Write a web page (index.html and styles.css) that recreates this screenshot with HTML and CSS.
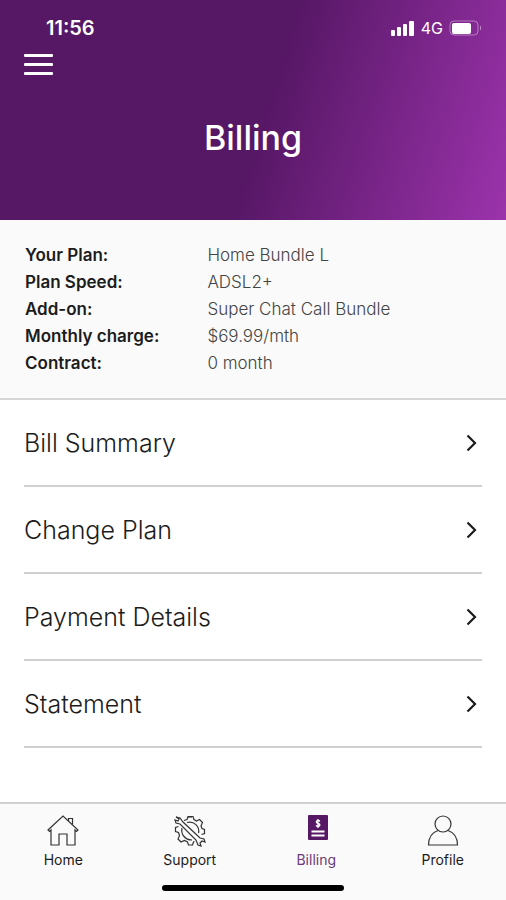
FILE: index.html
```
<!DOCTYPE html>
<html lang="en">
<head>
    <meta charset="UTF-8">
    <meta name="viewport" content="width=device-width, initial-scale=1.0">
    <title>Billing</title>
    <link rel="stylesheet" href="styles.css">
</head>
<body>
    <header class="header">
        <div class="status-bar">
            <span class="time">11:56</span>
            <div class="status-icons">
                <svg class="signal" width="24" height="16" viewBox="0 0 24 16" fill="#fff">
                    <rect x="0" y="10" width="4" height="6" rx="1"/>
                    <rect x="6" y="7" width="4" height="9" rx="1"/>
                    <rect x="12" y="4" width="4" height="12" rx="1"/>
                    <rect x="18" y="1" width="5" height="15" rx="1"/>
                </svg>
                <span class="network">4G</span>
                <svg class="battery" width="33" height="16" viewBox="0 0 33 16">
                    <rect x="1" y="1" width="28" height="14" rx="4" fill="none" stroke="#fff" stroke-opacity="0.4"/>
                    <rect x="3" y="3" width="19" height="11" rx="2" fill="#fff"/>
                    <path d="M31 5.500c1.400.8 1.400 4.200 0 5z" fill="#fff" fill-opacity="0.5"/>
                </svg>
            </div>
        </div>
        <button class="menu-btn" type="button" aria-label="Menu">
            <span class="bar"></span>
            <span class="bar"></span>
            <span class="bar"></span>
        </button>
        <h1>Billing</h1>
    </header>

    <main>
        <dl class="plan">
            <dt>Your Plan:</dt><dd>Home Bundle L</dd>
            <dt>Plan Speed:</dt><dd>ADSL2+</dd>
            <dt>Add-on:</dt><dd>Super Chat Call Bundle</dd>
            <dt>Monthly charge:</dt><dd>$69.99/mth</dd>
            <dt>Contract:</dt><dd>0 month</dd>
        </dl>

        <nav class="links">
            <a href="#summary">Bill Summary
                <svg width="12" height="18" viewBox="0 0 12 18"><path d="M1.500 1.500L9 9l-7.500 7.500"/></svg>
            </a>
            <a href="#plan">Change Plan
                <svg width="12" height="18" viewBox="0 0 12 18"><path d="M1.500 1.500L9 9l-7.500 7.500"/></svg>
            </a>
            <a href="#payment">Payment Details
                <svg width="12" height="18" viewBox="0 0 12 18"><path d="M1.500 1.500L9 9l-7.500 7.500"/></svg>
            </a>
            <a href="#statement">Statement
                <svg width="12" height="18" viewBox="0 0 12 18"><path d="M1.500 1.500L9 9l-7.500 7.500"/></svg>
            </a>
        </nav>
    </main>

    <footer class="footer">
        <nav class="tabs">
            <a href="#home">
                <svg width="32" height="32" viewBox="0 0 32 32">
                    <path d="M1 15L16 1l15 14-1.500 1.500L28 15v15h-8V19h-8v11H4V15l-1.500 1.500z"/>
                    <path d="M21.500 6V3.500h4v6"/>
                </svg>
                <span>Home</span>
            </a>
            <a href="#support">
                <svg width="32" height="32" viewBox="0 0 32 32">
                    <path d="M10 5.500l3-1 1-3h5l1 3 2.500 1.500 3-1.500 3 3-1.500 3.500 1 2.500 2.500 1v4l-3 1"/>
                    <path d="M20.500 26.500l-1 .5-1 3h-4l-1-3-3-1.500-3.500 1.500L4 24l1.500-3.500-1-3-3-1v-4l3-1"/>
                    <path d="M14 2h4"/>
                    <path d="M2 2l4 1 3 4 17 16 4 1 1 3-3-1-2 2 1 3-3-1-2-5L6 9 2 8l-1-3 3 1 1-2z"/>
                    <path d="M13 7.500c7-2 13 4 11.500 10.500M8 13c-1.500 6 3 12 10 12"/>
                </svg>
                <span>Support</span>
            </a>
            <a class="active" href="#billing">
                <svg width="32" height="32" viewBox="0 0 32 32">
                    <rect class="page" x="8" y="0" width="20" height="25" rx="1"/>
                    <path class="ink" d="M11.500 16.500h13M11.500 20.500h13"/>
                    <path class="ink dollar" d="M19.800 6.500c-.5-1.500-3.500-1.300-3.500.500 0 2 3.600 1 3.600 3 0 1.800-3.200 2-3.800.3M18 4v9"/>
                </svg>
                <span>Billing</span>
            </a>
            <a href="#profile">
                <svg width="32" height="32" viewBox="0 0 32 32">
                    <circle cx="16" cy="9" r="8"/>
                    <path d="M11 15.500C5 17.500 1.500 22 1.500 30h29c0-8-3.500-12.500-9.500-14.500"/>
                </svg>
                <span>Profile</span>
            </a>
        </nav>
        <div class="home-bar"></div>
    </footer>
</body>
</html>
```
FILE: styles.css
```
*{
    margin: 0;
    padding: 0;
    box-sizing: border-box;
}
body {
    min-height: 100vh;
    display: flex;
    flex-direction: column;
    background-color: #fff;
    color: #1c1c1c;
    font-family: Inter, "Liberation Sans", sans-serif;
}
a {
    color: inherit;
    text-decoration: none;
}

/* header */
.header {
    height: 220px;
    padding: 16px 24px;
    color: #fff;
    background: linear-gradient(107deg, #561765 52%, #9c33ac);
}
.status-bar {
    display: flex;
    justify-content: space-between;
    align-items: center;
    height: 24px;
    padding-left: 22px;
}
.time {
    font-size: 20px;
    font-weight: 600;
}
.status-icons {
    display: flex;
    align-items: center;
    gap: 6px;
}
.network {
    font-size: 16px;
}
.menu-btn {
    display: flex;
    flex-direction: column;
    gap: 6px;
    margin-top: 14px;
    border: none;
    background: transparent;
    cursor: pointer;
}
.bar {
    width: 29px;
    height: 3px;
    border-radius: 1px;
    background-color: #fff;
}
h1 {
    margin-top: 41px;
    font-size: 34px;
    line-height: 44px;
    font-weight: 500;
    text-align: center;
}

/* plan details */
.plan {
    display: grid;
    grid-template-columns: 2fr 3fr;
    padding: 22px 25px 21px;
    border-bottom: 2px solid #d6d6d6;
    background-color: #fafafa;
    font-size: 17px;
    line-height: 27px;
}
.plan dt {
    font-weight: 600;
}
.plan dd {
    color: #444;
    font-weight: 300;
}

/* links */
.links {
    padding: 0 24px;
}
.links a {
    display: flex;
    justify-content: space-between;
    align-items: center;
    height: 87px;
    padding-right: 4px;
    border-bottom: 2px solid #d0d0d0;
    font-size: 25px;
    font-weight: 300;
}
.links svg {
    fill: none;
    stroke: #1c1c1c;
    stroke-width: 2.2;
}

/* bottom tabs */
.footer {
    margin-top: auto;
    padding: 11px 0 9px;
    border-top: 2px solid #d0d0d0;
    background-color: #fafafa;
}
.tabs {
    display: grid;
    grid-template-columns: repeat(4, 1fr);
}
.tabs a {
    display: flex;
    flex-direction: column;
    align-items: center;
    gap: 3px;
    font-size: 14px;
    line-height: 20px;
}
.tabs svg {
    fill: none;
    stroke: #333;
    stroke-width: 1.2;
}
.tabs .active {
    color: #6b3a7a;
}
.tabs .page {
    fill: #561765;
    stroke: none;
}
.tabs .ink {
    stroke: #fff;
    stroke-width: 2;
}
.tabs .dollar {
    stroke-width: 1.3;
}
.home-bar {
    width: 36%;
    height: 6px;
    margin: 15px auto 0;
    border-radius: 3px;
    background-color: #000;
}
```
